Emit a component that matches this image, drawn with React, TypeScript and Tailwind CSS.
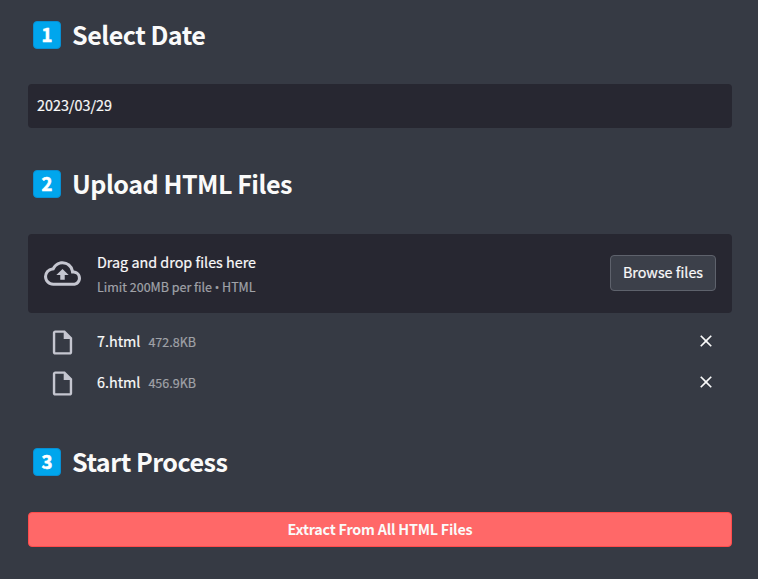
import type { ReactNode } from "react";
import { MdClose, MdOutlineCloudUpload, MdOutlineInsertDriveFile } from "react-icons/md";

function StepHeading({ step, children }: { step: number; children: ReactNode }) {
  return (
    <h2 className="flex h-[34px] items-center pl-[5px] text-[25.1px] font-bold leading-[34px] text-[#fafafa]">
      <span className="mr-[11px] flex h-7 w-7 items-center justify-center rounded-[4px] border border-[#078fd4] bg-[#00a6ed] pb-px text-[18.5px] leading-none text-white [-webkit-text-stroke:0.6px_white]">
        {step}
      </span>
      <span className="whitespace-nowrap pb-0.5 tracking-[-0.5px]">{children}</span>
    </h2>
  );
}

function FileRow({ name, size }: { name: string; size: string }) {
  return (
    <li className="flex h-[41px] items-center pl-5 pr-4">
      <MdOutlineInsertDriveFile className="mr-5 size-[29px] shrink-0 text-[#c5c6d0]" />
      <span className="pb-[3px] text-[14.35px] leading-6 text-[#fafafa] [-webkit-text-stroke:0.2px_#fafafa]">{name}</span>
      <span className="ml-2 pb-0.5 text-[12.5px] leading-5 text-[#a0a2a8] [-webkit-text-stroke:0.2px_#a0a2a8]">{size}</span>
      <button className="ml-auto pb-1" aria-label="Remove file">
        <MdClose className="size-5 text-[#fafafa]" />
      </button>
    </li>
  );
}

export default function App() {
  return (
    <main className="h-[579px] w-[758px] overflow-hidden bg-[#363a44] px-7 pr-[26px] pt-[18px] font-['Noto_Sans_CJK_SC',sans-serif]">
      <StepHeading step={1}>Select Date</StepHeading>
      <div className="mt-8 flex h-11 items-center rounded-[4px] bg-[#272731] px-[9px] pb-0.5 text-[14.35px] leading-6 text-[#fafafa] [-webkit-text-stroke:0.2px_#fafafa]">
        2023/03/29
      </div>

      <div className="mt-[39px]">
        <StepHeading step={2}>Upload HTML Files</StepHeading>
      </div>
      <section className="mt-[33px] flex h-[79px] items-center rounded-[4px] bg-[#272731] px-4">
        <MdOutlineCloudUpload className="mr-4 size-[37px] shrink-0 text-[#c5c6d0]" />
        <div className="flex flex-col">
          <span className="h-[25px] text-[14.35px] leading-6 text-[#fafafa] [-webkit-text-stroke:0.2px_#fafafa]">Drag and drop files here</span>
          <span className="flex h-[22px] text-[12.5px] leading-6 text-[#a0a2a8] [-webkit-text-stroke:0.2px_#a0a2a8]">
            Limit 200MB per file
            <span className="mx-[3px] flex w-1 justify-center pt-px font-['Open_Sans',sans-serif] text-[12px]">•</span>
            HTML
          </span>
        </div>
        <button className="mb-0.5 ml-auto h-9 w-[106px] rounded-[4px] border border-[#5e626c] bg-[#3c404a] pb-0.5 text-[14.35px] leading-6 text-[#fafafa] [-webkit-text-stroke:0.2px_#fafafa]">
          Browse files
        </button>
      </section>
      <ul className="mt-[9px]">
        <FileRow name="7.html" size="472.8KB" />
        <FileRow name="6.html" size="456.9KB" />
      </ul>

      <div className="mt-[41px]">
        <StepHeading step={3}>Start Process</StepHeading>
      </div>
      <button className="mt-[33px] block h-[35px] w-full rounded-[4px] border border-[#ff4b4b] bg-[#ff6868] pb-0.5 text-[14.35px] font-bold leading-6 tracking-[-0.22px] text-[#fafafa]">
        Extract From All HTML Files
      </button>
    </main>
  );
}
